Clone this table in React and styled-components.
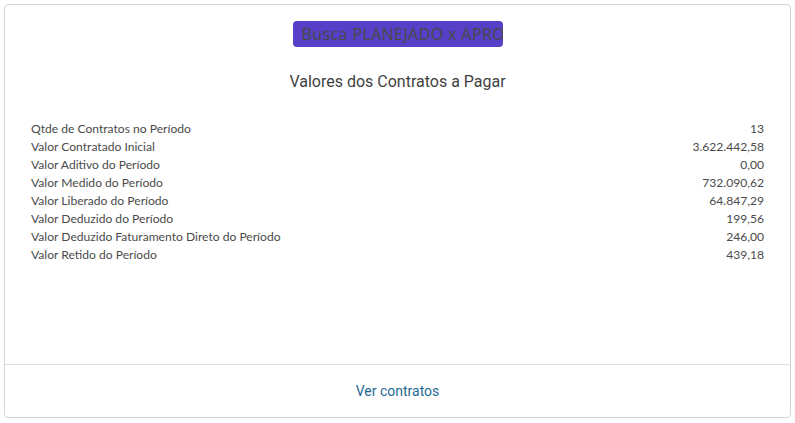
import React from 'react';
import styled, { createGlobalStyle } from 'styled-components';

const GlobalStyle = createGlobalStyle`
	body {
		margin: 0;
		background: #fff;
		font-family: 'Lato', 'Noto Sans', sans-serif;
	}
`;

const Page = styled.div`
	padding: 4px;
	height: 423px;
	box-sizing: border-box;
`;

const Card = styled.div`
	border: 1px solid #d3d3d3;
	border-radius: 4px;
	height: 414px;
	box-sizing: border-box;
	display: flex;
	flex-direction: column;
`;

const Body = styled.div`
	flex: 1;
	padding: 16px 26px 0 26px;
	display: flex;
	flex-direction: column;
	align-items: center;
`;

const SearchBtn = styled.button`
	width: 210px;
	height: 26px;
	border: none;
	border-radius: 4px;
	background-color: #583fc7;
	color: #454b45;
	font-family: 'Open Sans', sans-serif;
	font-size: 16px;
	letter-spacing: 0.4px;
	padding: 0 8px 0 9px;
	white-space: nowrap;
	overflow: hidden;
	text-align: left;
`;

const Title = styled.h3`
	margin: 25px 0 0 0;
	font-family: 'Roboto', sans-serif;
	font-weight: 400;
	font-size: 16px;
	color: #3f3f3f;
`;

const List = styled.div`
	width: 100%;
	margin-top: 29px;
`;

const Row = styled.div`
	display: flex;
	justify-content: space-between;
	height: 18px;
	line-height: 18px;
	font-size: 12.1px;
	color: #4a4a4a;
`;

const Footer = styled.div`
	border-top: 1px solid #dedede;
	height: 52px;
	display: flex;
	align-items: center;
	justify-content: center;
`;

const FooterLink = styled.a`
	color: #1f6a96;
	font-family: 'Roboto', sans-serif;
	font-size: 14px;
	text-decoration: none;
	cursor: pointer;
`;

const rows = [
	['Qtde de Contratos no Período', '13'],
	['Valor Contratado Inicial', '3.622.442,58'],
	['Valor Aditivo do Período', '0,00'],
	['Valor Medido do Período', '732.090,62'],
	['Valor Liberado do Período', '64.847,29'],
	['Valor Deduzido do Período', '199,56'],
	['Valor Deduzido Faturamento Direto do Período', '246,00'],
	['Valor Retido do Período', '439,18'],
];

const App = () => {
	return (
		<Page>
			<GlobalStyle />
			<Card>
				<Body>
					<SearchBtn>Busca PLANEJADO x APROVADO</SearchBtn>
					<Title>Valores dos Contratos a Pagar</Title>
					<List>
						{rows.map(([label, value]) => (
							<Row key={label}>
								<span>{label}</span>
								<span>{value}</span>
							</Row>
						))}
					</List>
				</Body>
				<Footer>
					<FooterLink>Ver contratos</FooterLink>
				</Footer>
			</Card>
		</Page>
	);
};

export default App;
